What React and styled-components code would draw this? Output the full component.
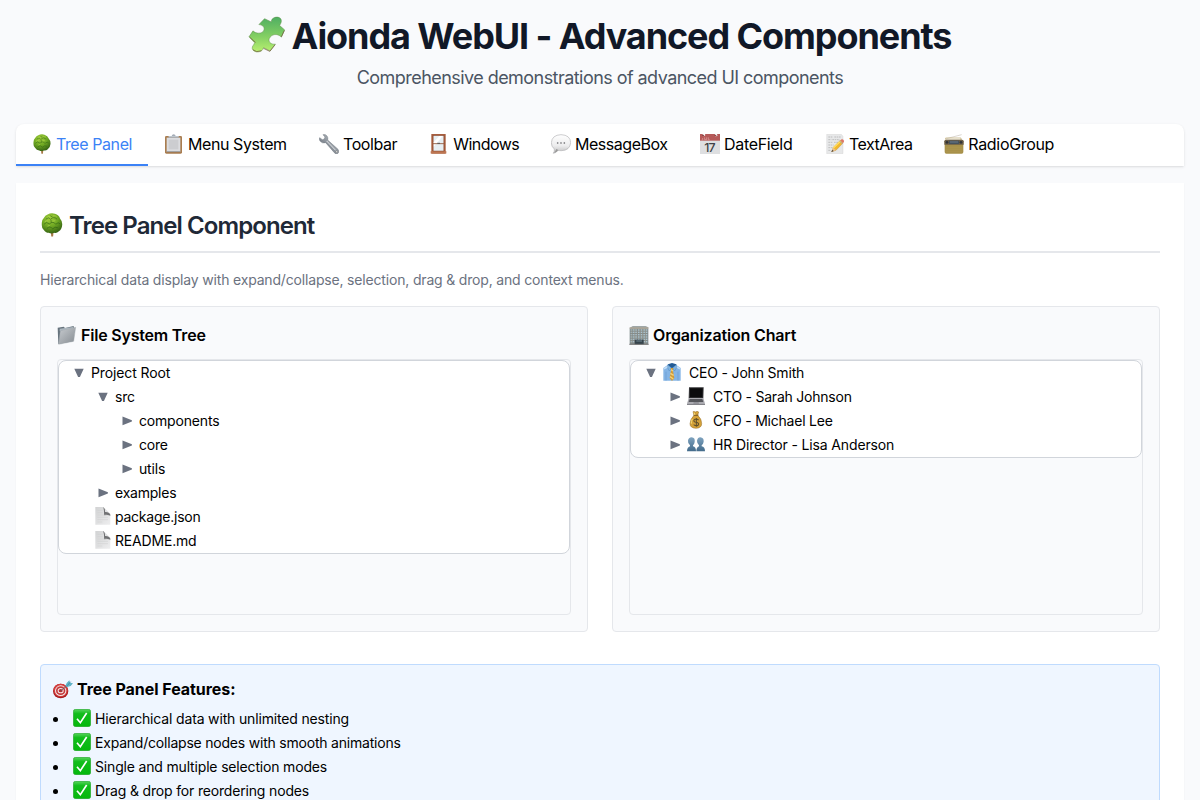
import React from "react";
import styled, { createGlobalStyle } from "styled-components";

const Global = createGlobalStyle`
  *, *::before, *::after { box-sizing: border-box; }
  html, body { margin: 0; height: 800px; overflow: hidden; background: #f9fafc; }
  body { font-family: Inter, "Liberation Sans", sans-serif; font-size: 14px; line-height: 20px; color: #000; }
  h1, h2, h3, h4, p, ul { margin: 0; padding: 0; font-weight: inherit; font-size: inherit; }
`;

const Label = styled.span`
  letter-spacing: ${(p) => p.$track || 0}px;
  white-space: nowrap;
`;

const Icon = styled.svg`
  display: block;
  flex: none;
  width: ${(p) => p.$size || 20}px;
  height: ${(p) => p.$h || p.$size || 20}px;
`;

const Page = styled.div`
  height: 800px;
  padding: 16px;
  overflow: hidden;
`;

const Header = styled.header`
  display: flex;
  flex-direction: column;
  align-items: center;
  height: 108px;
`;

const Title = styled.h1`
  display: flex;
  align-items: center;
  gap: 7px;
  height: 40px;
  padding-right: 1px;
  font-size: 36px;
  font-weight: 700;
  line-height: 40px;
  color: #111827;

  > svg { margin-bottom: 3px; }
`;

const Subtitle = styled.p`
  margin-top: 8px;
  font-size: 18px;
  line-height: 28px;
  color: #4b5563;
`;

const TabBar = styled.nav`
  display: flex;
  height: 42px;
  background: #fff;
  border-radius: 8px 8px 0 0;
  box-shadow: 0 1px 3px rgba(0, 0, 0, 0.1), 0 1px 2px -1px rgba(0, 0, 0, 0.1);
`;

const Tab = styled.button`
  display: flex;
  align-items: center;
  gap: 4px;
  width: ${(p) => p.$width}px;
  padding: 0 0 0 16px;
  border: 0;
  border-bottom: 2px solid ${(p) => (p.$active ? "#3b82f6" : "transparent")};
  background: none;
  font: 400 16px/24px Inter, "Liberation Sans", sans-serif;
  color: ${(p) => (p.$active ? "#3b82f6" : "#000")};
`;

const Panel = styled.main`
  margin-top: 17px;
  height: 900px;
  padding: 24px;
  background: #fff;
  box-shadow: 0 1px 2px rgba(0, 0, 0, 0.04);
`;

const PanelTitle = styled.h2`
  display: flex;
  align-items: center;
  gap: 5px;
  height: 46px;
  padding-bottom: 6px;
  border-bottom: 2px solid #e5e7eb;
  font-size: 24px;
  font-weight: 600;
  line-height: 32px;
  color: #1f2937;

  > svg { margin-bottom: 2px; }
`;

const Description = styled.p`
  margin: 17px 0 16px;
  color: #6b7280;
`;

const Cards = styled.div`
  display: grid;
  grid-template-columns: 1fr 1fr;
  gap: 24px;
`;

const Card = styled.section`
  height: 326px;
  padding: 16px;
  background: #f9fafc;
  border: 1px solid #e5e7eb;
  border-radius: 4px;
`;

const CardTitle = styled.h3`
  display: flex;
  align-items: center;
  gap: 4px;
  height: 24px;
  margin-bottom: 12px;
  font-size: 16px;
  font-weight: 600;
  line-height: 24px;
`;

const TreeFrame = styled.div`
  height: 256px;
  border: 1px solid #e5e7eb;
  border-radius: 4px;
`;

const TreeBody = styled.div`
  background: #fff;
  border: 1px solid #d1d5db;
  border-radius: 8px;
`;

const TreeRow = styled.div`
  display: flex;
  align-items: center;
  gap: 4px;
  height: 24px;
  padding-left: ${(p) => 12 + p.$level * 24}px;
`;

const Slot = styled.span`
  display: flex;
  align-items: center;
  justify-content: ${(p) => (p.$start ? "flex-start" : "center")};
  width: ${(p) => p.$width}px;
  height: 24px;
  padding-bottom: ${(p) => (p.$raised ? 2 : 0)}px;
`;

const Features = styled.section`
  height: 240px;
  margin-top: 32px;
  padding: 12px;
  background: #eff6ff;
  border: 1px solid #bfdbfe;
  border-radius: 4px;
`;

const FeatureTitle = styled.h4`
  display: flex;
  align-items: center;
  gap: 4px;
  height: 24px;
  margin-bottom: 6px;
  font-size: 16px;
  font-weight: 700;
  line-height: 24px;
`;

const FeatureList = styled.ul`
  list-style: none;
`;

const Feature = styled.li`
  display: flex;
  align-items: center;
  gap: 4px;
  height: 24px;
  &::before {
    content: "";
    width: 5px;
    height: 5px;
    margin-right: 11px;
    border-radius: 50%;
    background: #000;
  }
`;

const Puzzle = () => (
  <Icon $size={37} viewBox="51 50 112 112">
    <defs>
      <linearGradient id="pz" x1="0" y1="0" x2="0" y2="1">
        <stop offset="0" stopColor="#4fae62" /><stop offset=".55" stopColor="#83cf63" /><stop offset="1" stopColor="#b9f071" />
      </linearGradient>
    </defs>
    <path d="M101 58L122 68C120 55 140 49 149 57C156 66 149 73 147 79L162 92L152 114C140 101 121 105 115 119C112 131 124 137 134 135L118 156L98 146C95 162 68 163 64 149C62 141 70 137 71 131L54 113L66 95C74 104 95 105 99 93C103 83 93 76 84 76Z" fill="url(#pz)" stroke="#5f8f4a" strokeWidth="1.5" strokeLinejoin="round" />
    <path d="M56 114L74 130M66 152Q76 162 92 155M98 148L117 157L133 137M152 113L161 94" fill="none" stroke="#77543d" strokeWidth="2" />
  </Icon>
);

const Tree = ({ size = 20, h }) => (
  <Icon $size={size} $h={h} viewBox="-3 0 66 62" preserveAspectRatio="none">
    <defs>
      <radialGradient id="tr" cx=".4" cy=".25" r=".8">
        <stop offset="0" stopColor="#a3d03c" /><stop offset=".5" stopColor="#6ea722" /><stop offset="1" stopColor="#2f5c12" />
      </radialGradient>
    </defs>
    <path d="M26 42H35L33 61H28Z" fill="#a67845" />
    <path d="M18 4Q27 -1 38 2Q49 5 52 14Q59 21 58 31Q57 43 49 47Q43 53 36 51Q28 55 21 51Q12 51 7 43Q1 38 2 28Q1 18 8 12Q11 6 18 4Z" fill="url(#tr)" />
    <path d="M13 16Q20 9 26 16Q35 8 44 16M8 29Q14 21 23 28Q34 20 40 29Q48 22 52 28M16 40Q24 32 32 41Q38 34 46 38M24 7L31 10M27 17L28 25" fill="none" stroke="#285b12" strokeWidth="2.4" opacity=".6" />
    <path d="M17 11Q22 7 26 9M33 7Q40 6 43 10M10 23Q16 18 20 21M32 21L39 20M18 34L24 32" fill="none" stroke="#b5d950" strokeWidth="2.2" opacity=".75" />
  </Icon>
);

const Clipboard = () => (
  <Icon viewBox="0 0 60 60">
    <rect x="3" y="6" width="51" height="53" rx="4" fill="#a97d50" />
    <rect x="8" y="11" width="41" height="43" fill="#dcdde0" />
    <rect x="14" y="17" width="29" height="29" fill="#cccdd0" />
    <path d="M8 53H49" stroke="#777" strokeWidth="2" />
    <path d="M14 10V6H23Q24 1 29 1Q34 1 35 6H44V11H14Z" fill="#a5adb8" />
    <path d="M14 8H44" stroke="#d2d9df" strokeWidth="2" />
  </Icon>
);

const Wrench = () => (
  <Icon viewBox="0 0 60 60">
    <defs><linearGradient id="wr" x1="1" y1="0" x2="0" y2="1"><stop offset="0" stopColor="#ccd1d6" /><stop offset=".5" stopColor="#8f969e" /><stop offset="1" stopColor="#555b64" /></linearGradient></defs>
    <path d="M12 2Q20 0 24 6Q28 11 26 18L57 46Q62 53 57 58Q51 62 46 56L20 26Q10 29 4 22Q-1 16 2 11L10 17L16 15L18 9Z" fill="url(#wr)" stroke="#737a82" strokeWidth="1.5" />
    <path d="M23 21L50 49" stroke="#e3e5e8" strokeWidth="3" />
    <circle cx="53" cy="53" r="3" fill="#ddd" stroke="#555" />
  </Icon>
);

const WindowIcon = () => (
  <Icon viewBox="0 0 60 60">
    <rect x="7" y="0" width="43" height="59" fill="#a75e3e" />
    <rect x="13" y="5" width="31" height="46" fill="#e7eff3" />
    <path d="M14 25L31 6H41L14 38Z" fill="#fff" />
    <path d="M12 29H45" stroke="#9d6b54" strokeWidth="3" />
    <path d="M25 28H33" stroke="#555" strokeWidth="3" />
    <path d="M5 55H52" stroke="#bf7652" strokeWidth="7" />
    <rect x="12" y="4" width="33" height="47" fill="none" stroke="#8a4d35" strokeWidth="1.5" />
  </Icon>
);

const Speech = () => (
  <Icon viewBox="0 0 60 60">
    <defs><linearGradient id="sp" x1="0" y1="0" x2="0" y2="1"><stop offset="0" stopColor="#fff" /><stop offset=".6" stopColor="#ececed" /><stop offset="1" stopColor="#bbb" /></linearGradient></defs>
    <path d="M30 2Q58 3 59 26Q57 49 31 50Q25 50 21 49Q16 57 7 58Q11 53 10 45Q1 38 1 26Q3 3 30 2Z" fill="url(#sp)" stroke="#b4b4b7" strokeWidth="2" />
    <path d="M16 45Q12 55 8 57Q17 56 22 48" fill="#999" />
    <g fill="#606064"><circle cx="20" cy="27" r="2.5" /><circle cx="30" cy="27" r="2.5" /><circle cx="40" cy="27" r="2.5" /></g>
  </Icon>
);

const CalendarText = styled.text`
  font: 500 37px Inter, sans-serif;
  letter-spacing: -3px;
  fill: #3f4145;
`;

const Calendar = () => (
  <Icon viewBox="0 0 60 60">
    <rect x="0" y="4" width="60" height="56" fill="#dedfe1" />
    <rect x="0" y="0" width="60" height="20" fill="#b65a59" />
    <path d="M8 12V17Q8 19 5 18M14 10V17H20V10M25 10V17H29" fill="none" stroke="#e2a5a3" strokeWidth="2" />
    <path d="M10 -1L14 5M47 -1L50 6" stroke="#fff" strokeWidth="6" />
    <path d="M7 4H12M44 4H49" stroke="#6d3534" strokeWidth="3" />
    <CalendarText x="13" y="54">17</CalendarText>
  </Icon>
);

const Memo = () => (
  <Icon viewBox="-4 0 60 60">
    <path d="M1 1H45L50 7V59H1Z" fill="#e7e8e9" stroke="#ccc" />
    <path d="M6 9H20M24 9H43M6 17H15M18 17H40M6 25H19M23 25H36M6 33H22M6 41H18M6 49H14" stroke="#aaa" strokeWidth="2" strokeDasharray="5 2" />
    <path d="M16 53L21 40L42 19L50 27L29 49Z" fill="#f2b82c" stroke="#a9772b" strokeWidth="1" />
    <path d="M21 42L43 21" stroke="#ffdf65" strokeWidth="4" />
    <path d="M16 53L21 41L29 49Z" fill="#eac191" /><path d="M15 54L18 48L22 51Z" fill="#333" />
    <path d="M42 19L46 16Q50 15 53 20Q54 24 50 27Z" fill="#df7668" />
    <path d="M39 20L49 30" stroke="#aaa" strokeWidth="3" />
  </Icon>
);

const Radio = () => (
  <Icon viewBox="0 0 60 60">
    <path d="M7 14L53 2" stroke="#c4bcb2" strokeWidth="1.8" />
    <path d="M5 17V12H51V18" fill="none" stroke="#b9a468" strokeWidth="2" />
    <rect x="2" y="17" width="56" height="42" rx="5" fill="#a8914a" />
    <path d="M1 22Q1 17 6 17H54Q59 17 59 22V32H1Z" fill="#6b5d48" />
    <rect x="15" y="20" width="30" height="10" fill="#46535f" />
    <path d="M18 24H42" stroke="#82909b" strokeWidth="2" />
    <circle cx="9" cy="25" r="4" fill="#2f3338" /><circle cx="51" cy="25" r="4" fill="#2f3338" />
    <path d="M6 40H54M6 46H54M6 52H54" stroke="#b09952" strokeWidth="1.5" />
  </Icon>
);

const Folder = () => (
  <Icon viewBox="0 0 60 60">
    <defs><linearGradient id="fo" x1="0" y1="0" x2="1" y2="1"><stop offset="0" stopColor="#c8ccd0" /><stop offset="1" stopColor="#858b91" /></linearGradient></defs>
    <path d="M2 8L20 5L24 9L50 3L51 9L53 10L48 49L4 57Z" fill="#66737d" />
    <path d="M8 11L49 6L46 14L8 18Z" fill="#aeb8c0" />
    <path d="M10 17L56 7L50 49L5 58Z" fill="url(#fo)" stroke="#a2a9af" strokeWidth="1.2" />
  </Icon>
);

const Building = () => (
  <Icon viewBox="0 0 60 60">
    <path d="M2 8L11 4H50L58 7V58H2Z" fill="#818b8c" />
    <path d="M2 9H58" stroke="#bdb3a2" strokeWidth="4" />
    <g fill="#acc4cf">{[13, 20, 27, 34, 41, 48].map((y) => [5, 12, 19, 27, 35, 43, 50].map((x) => <rect key={x + "-" + y} x={x} y={y} width="5" height="4" />))}</g>
    <path d="M8 11V56M16 11V56M24 11V56M33 11V56M41 11V56M49 11V56" stroke="#9e9787" strokeWidth="1.5" />
    <rect x="17" y="44" width="27" height="14" fill="#36444c" /><path d="M22 48H39" stroke="#718792" strokeWidth="3" /><path d="M1 58H59" stroke="#747474" strokeWidth="3" />
  </Icon>
);

const Page16 = () => (
  <Icon $size={16} $h={18} viewBox="0 0 48 54">
    <defs><linearGradient id="pg" x1="0" y1="0" x2="1" y2="1"><stop offset="0" stopColor="#d2d3d4" /><stop offset="1" stopColor="#eeeeef" /></linearGradient></defs>
    <path d="M1 0H25L46 20V53H1Z" fill="url(#pg)" />
    <path d="M24 0Q31 4 30 15Q42 14 46 23L46 26Q39 22 27 25Q28 7 24 0Z" fill="#707173" />
    <path d="M7 10H23M7 17H23M7 24H37M7 31H39M7 38H39M7 45H22" stroke="#cdcecf" strokeWidth="1.5" />
  </Icon>
);

const Shirt = () => (
  <Icon $size={18} viewBox="0 0 54 54">
    <path d="M1 15L18 3H36L53 15V53H1Z" fill="#84b4e5" />
    <path d="M9 26V53M45 26V53" stroke="#5f93cb" strokeWidth="1.5" />
    <path d="M3 17L18 9M36 9L51 17" stroke="#c1ddf6" strokeWidth="5" />
    <path d="M15 4L27 0L40 4L37 14L27 17L17 13Z" fill="#235b95" />
    <path d="M14 5L26 15L19 24Q12 15 14 5ZM40 5L28 15L35 24Q43 15 40 5Z" fill="#7fb3e2" stroke="#477dae" />
    <path d="M23 15H31L30 23L34 45L27 54L20 45L24 23Z" fill="#d29b36" />
    <path d="M24 20L30 24M22 31L32 37M21 41L31 48" stroke="#f4d27a" strokeWidth="4" />
  </Icon>
);

const Laptop = () => (
  <Icon $size={18} viewBox="0 0 54 54">
    <path d="M6 1H50L49 34H5Z" fill="#343437" /><path d="M9 4H47L46 31H9Z" fill="#0b0b0d" />
    <path d="M5 33H49L54 50V54H0V50Z" fill="#aaaab0" />
    <path d="M8 36H46L49 45H5Z" fill="#55565b" /><path d="M20 46H35L36 50H19Z" fill="#888990" /><path d="M0 53H54" stroke="#66676c" strokeWidth="2" />
  </Icon>
);

const Money = () => (
  <Icon $size={18} viewBox="0 0 54 54">
    <path d="M18 2Q23 0 26 3Q30 -1 35 3L32 13Q44 23 44 38Q44 51 27 52Q9 51 9 38Q10 24 21 13Z" fill="#d5a239" stroke="#936a24" strokeWidth="1.5" />
    <path d="M20 13H34" stroke="#8c672a" strokeWidth="4" /><path d="M21 5L24 12M16 24Q12 31 13 38" fill="none" stroke="#f7dd79" strokeWidth="3" />
    <path d="M35 27Q26 21 21 27Q19 33 28 34Q37 36 34 42Q28 47 20 41M28 21V47" fill="none" stroke="#61502b" strokeWidth="3.2" />
  </Icon>
);

const People = () => (
  <Icon $size={18} viewBox="0 0 54 54">
    <defs><linearGradient id="pp" x1="0" y1="0" x2="0" y2="1"><stop offset="0" stopColor="#7fa3bf" /><stop offset="1" stopColor="#426a8a" /></linearGradient></defs>
    <path d="M14 7Q25 8 23 21Q22 28 18 31V34Q27 36 27 49H0Q0 37 9 34V31Q2 26 3 17Q4 8 14 7Z" fill="url(#pp)" />
    <path d="M40 7Q51 8 50 20Q49 27 44 31V34Q54 36 54 49H28Q28 37 36 34V31Q30 26 30 18Q31 8 40 7Z" fill="url(#pp)" />
  </Icon>
);

const Target = () => (
  <Icon viewBox="0 -4 60 60">
    <ellipse cx="23" cy="32" rx="23" ry="22" fill="#a61d20" /><ellipse cx="23" cy="30" rx="21" ry="20" fill="#d63e3d" />
    <ellipse cx="23" cy="31" rx="17" ry="16" fill="#f1e8e8" /><ellipse cx="23" cy="31" rx="14" ry="13" fill="#c5393a" />
    <ellipse cx="23" cy="31" rx="9" ry="8" fill="#f5e9e8" /><ellipse cx="23" cy="31" rx="6" ry="5" fill="#b62e32" />
    <path d="M24 31L47 12" stroke="#59606b" strokeWidth="2.5" /><path d="M37 17L41 8L49 0L51 7L60 9L53 17L43 20Z" fill="#60b3c7" /><path d="M43 16L53 4" stroke="#317c92" strokeWidth="2" />
  </Icon>
);

const Check = () => (
  <Icon $size={18} viewBox="0 0 54 54">
    <defs><linearGradient id="ck" x1="0" y1="0" x2="0" y2="1"><stop offset="0" stopColor="#58d45d" /><stop offset=".25" stopColor="#12bd1c" /><stop offset="1" stopColor="#04b80c" /></linearGradient></defs>
    <rect x="1" y="1" width="52" height="52" rx="7" fill="url(#ck)" stroke="#24a42b" strokeWidth="2" />
    <path d="M12 29L22 41L41 12" fill="none" stroke="#fff" strokeWidth="5" />
  </Icon>
);

const Arrow = ({ open }) => (
  <Icon $size={10} viewBox="0 0 10 10">
    <path d={open ? "M.3 .8H9.7L5.9 8.9H4.1Z" : "M.5 .5L9.9 4.2V5.5L.5 9.2Z"} fill="#6b7280" />
  </Icon>
);

const tabs = [
  ["Tree Panel", Tree, 132, -0.42],
  ["Menu System", Clipboard, 155, -0.42],
  ["Toolbar", Wrench, 110.2, -0.42],
  ["Windows", WindowIcon, 121.8, -0.55],
  ["MessageBox", Speech, 149, -0.46],
  ["DateField", Calendar, 125, -0.32],
  ["TextArea", Memo, 119.3, -0.52],
  ["RadioGroup", Radio, 142, -0.32],
];

const files = [
  ["Project Root", 0, "open", null, -0.12],
  ["src", 1, "open"],
  ["components", 2, "closed"],
  ["core", 2, "closed", null, -0.22],
  ["utils", 2, "closed"],
  ["examples", 1, "closed", null, -0.22],
  ["package.json", 1, "file", null, -0.24],
  ["README.md", 1, "file"],
];

const people = [
  ["CEO - John Smith", 0, "open", Shirt],
  ["CTO - Sarah Johnson", 1, "closed", Laptop, -0.23],
  ["CFO - Michael Lee", 1, "closed", Money, -0.22],
  ["HR Director - Lisa Anderson", 1, "closed", People, -0.14],
];

const features = [
  ["Hierarchical data with unlimited nesting", -0.16],
  ["Expand/collapse nodes with smooth animations", -0.21],
  ["Single and multiple selection modes", -0.17],
  ["Drag & drop for reordering nodes", -0.17],
];

const TreeView = ({ rows }) => (
  <TreeFrame>
    <TreeBody>
      {rows.map(([text, level, state, Badge, track = -0.18]) => (
        <TreeRow key={text} $level={level}>
          <Slot $width={16} $raised={state === "file"}>{state === "file" ? <Page16 /> : <Arrow open={state === "open"} />}</Slot>
          {Badge && <Slot $width={22} $start $raised><Badge /></Slot>}
          <Label $track={track}>{text}</Label>
        </TreeRow>
      ))}
    </TreeBody>
  </TreeFrame>
);

export default function App() {
  return (
    <Page>
      <Global />
      <Header>
        <Title><Puzzle /><Label $track={-1.08}>Aionda WebUI - Advanced Components</Label></Title>
        <Subtitle><Label $track={-0.55}>Comprehensive demonstrations of advanced UI components</Label></Subtitle>
      </Header>
      <TabBar>
        {tabs.map(([text, Glyph, width, track], i) => (
          <Tab key={text} $width={width} $active={i === 0}><Glyph /><Label $track={track}>{text}</Label></Tab>
        ))}
      </TabBar>
      <Panel>
        <PanelTitle><Tree size={24} /><Label $track={-0.92}>Tree Panel Component</Label></PanelTitle>
        <Description><Label $track={-0.175}>Hierarchical data display with expand/collapse, selection, drag &amp; drop, and context menus.</Label></Description>
        <Cards>
          <Card><CardTitle><Folder /><Label $track={-0.2}>File System Tree</Label></CardTitle><TreeView rows={files} /></Card>
          <Card><CardTitle><Building /><Label $track={-0.16}>Organization Chart</Label></CardTitle><TreeView rows={people} /></Card>
        </Cards>
        <Features>
          <FeatureTitle><Target /><Label $track={-0.05}>Tree Panel Features:</Label></FeatureTitle>
          <FeatureList>
            {features.map(([text, track]) => <Feature key={text}><Slot $width={18} $raised><Check /></Slot><Label $track={track}>{text}</Label></Feature>)}
          </FeatureList>
        </Features>
      </Panel>
    </Page>
  );
}
